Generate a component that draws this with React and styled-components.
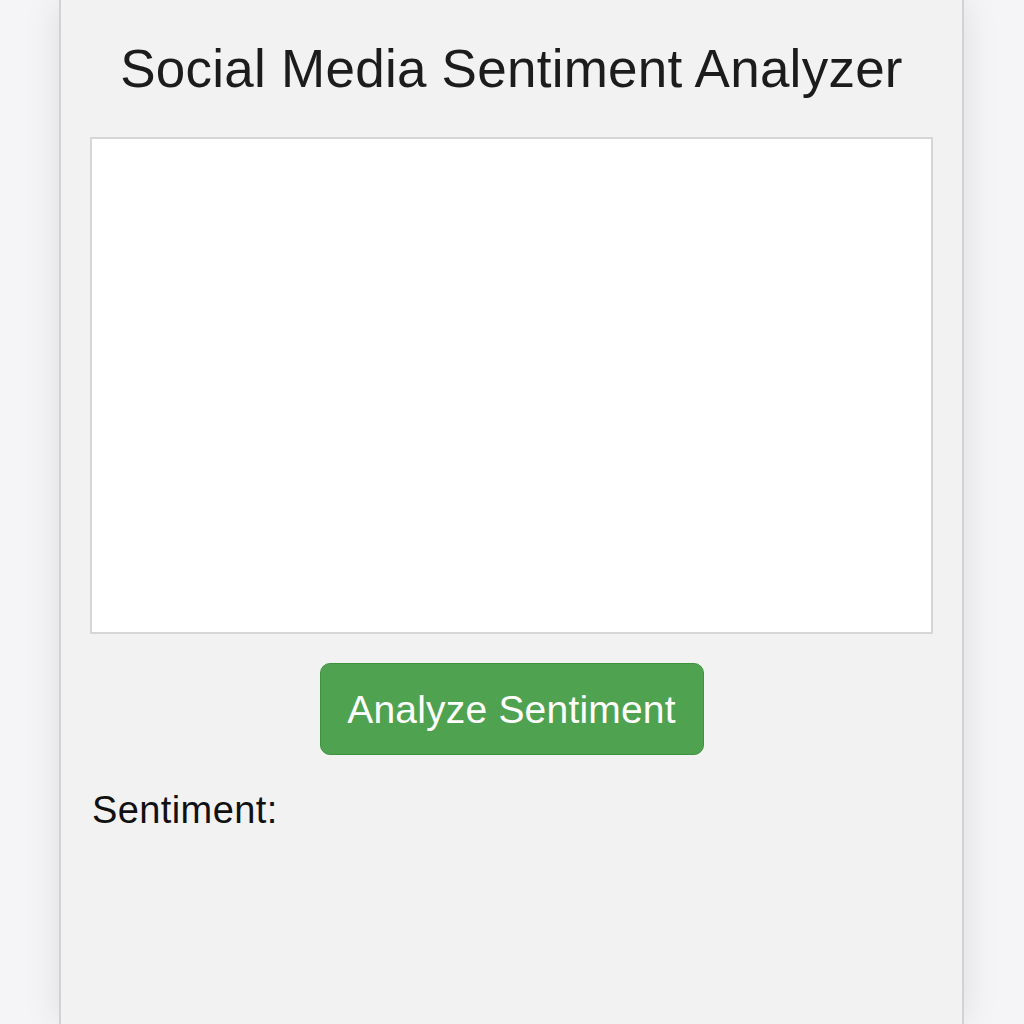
import React from "react";
import styled, { createGlobalStyle } from "styled-components";

const Global = createGlobalStyle`
  html, body { margin: 0; padding: 0; }
  body { background: #f5f5f7; font-family: "Liberation Sans", Arial, sans-serif; }
`;

const Page = styled.div`
  height: 1024px;
  display: flex;
  justify-content: center;
  background: #f5f5f7;
  overflow: hidden;
`;

const Panel = styled.main`
  box-sizing: border-box;
  width: 905px;
  margin-left: -1px;
  height: 100%;
  background: #f2f2f2;
  border-left: 2px solid #d2d2d4;
  border-right: 2px solid #d2d2d4;
  box-shadow: 0 0 34px rgba(0, 0, 0, 0.1);
  padding: 42px 29px 0;
  display: flex;
  flex-direction: column;
`;

const Title = styled.h1`
  margin: 0;
  font-size: 53px;
  line-height: 53px;
  font-weight: 400;
  letter-spacing: 0.25px;
  color: #1c1c1c;
  text-align: center;
`;

const Input = styled.textarea`
  box-sizing: border-box;
  margin-top: 42px;
  width: 100%;
  height: 497px;
  border: 2px solid #d6d6d6;
  background: #fff;
  resize: none;
  outline: none;
`;

const Button = styled.button`
  align-self: center;
  margin-top: 29px;
  width: 384px;
  height: 92px;
  border-radius: 10px;
  background: #4fa24f;
  border: 1px solid #3f933f;
  color: #fff;
  font-family: "Liberation Sans", Arial, sans-serif;
  font-size: 39px;
  line-height: 39px;
  letter-spacing: 0.2px;
  display: flex;
  align-items: center;
  justify-content: center;
  padding: 0;
  cursor: pointer;
`;

const Result = styled.p`
  margin: 36px 0 0 2px;
  font-size: 38px;
  line-height: 38px;
  letter-spacing: 0.4px;
  color: #111;
`;

export default function App() {
  return (
    <>
      <Global />
      <Page>
        <Panel>
          <Title>Social Media Sentiment Analyzer</Title>
          <Input />
          <Button>Analyze Sentiment</Button>
          <Result>Sentiment:</Result>
        </Panel>
      </Page>
    </>
  );
}
